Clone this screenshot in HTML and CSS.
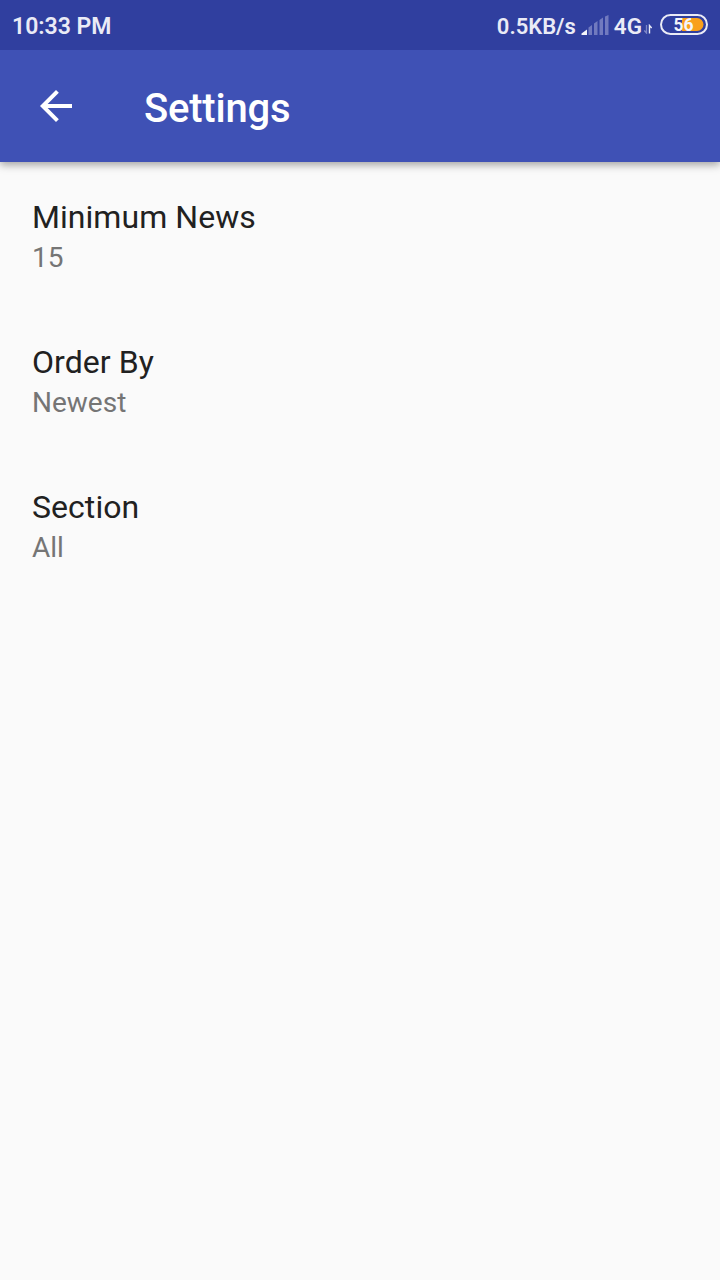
FILE: index.html
```html
<!DOCTYPE html>
<html lang="en">
<head>
<meta charset="utf-8">
<title>Settings</title>
<link rel="stylesheet" href="styles.css">
</head>
<body>
<div class="status-bar">
  <span class="clock">10:33 PM</span>
  <div class="indicators">
    <span class="speed">0.5KB/s</span>
    <svg class="signal" width="28" height="20" viewBox="0 0 28 20" aria-hidden="true">
      <path d="M.5 20V18.500L6 14.500V20Z" fill="#f4f5fb"/>
      <path d="M7.500 12.500l3.500-2.500v10H7.500zM13 8.500l3.500-2.500v14H13zM18.500 5l3.500-2.500V20h-3.500zM24 1.500L27.500 0v20H24z" fill="#717abf"/>
    </svg>
    <span class="network">4G</span>
    <svg class="data" width="8" height="10" viewBox="0 0 8 10" aria-hidden="true">
      <path d="M2.500 1v8L.3 6.500" fill="none" stroke="#7e87c7" stroke-width="1.300"/>
      <path d="M5.500 9.500V1.500L7.700 4" fill="none" stroke="#e8eaf6" stroke-width="1.400"/>
    </svg>
    <div class="battery">
      <svg class="battery-shape" width="48" height="21" viewBox="0 0 48 21" aria-hidden="true">
        <path d="M22 4H37a6.500 6.500 0 0 1 0 13H22z" fill="#f9a01b"/>
        <rect x="1" y="1" width="46" height="19" rx="9.500" fill="none" stroke="#eaebf6" stroke-width="2"/>
      </svg>
      <span class="battery-level">56</span>
    </div>
  </div>
</div>
<header class="app-bar">
  <svg class="back" width="48" height="48" viewBox="0 0 24 24" aria-label="Back">
    <path d="M20 11H7.830l5.590-5.590L12 4l-8 8 8 8 1.410-1.410L7.830 13H20v-2z" fill="#fff"/>
  </svg>
  <h1 class="title">Settings</h1>
</header>
<main class="preferences">
  <section class="preference">
    <div class="name">Minimum News</div>
    <div class="value">15</div>
  </section>
  <section class="preference">
    <div class="name">Order By</div>
    <div class="value">Newest</div>
  </section>
  <section class="preference">
    <div class="name">Section</div>
    <div class="value">All</div>
  </section>
</main>
</body>
</html>
```
FILE: styles.css
```css
* {
  box-sizing: border-box;
}

body {
  margin: 0;
  min-height: 1280px;
  background: #fafafa;
  font-family: Roboto, "Liberation Sans", sans-serif;
}

.status-bar {
  position: relative;
  z-index: 1;
  display: flex;
  justify-content: space-between;
  height: 50px;
  padding: 0 12px;
  background: #303f9f;
  color: #eaebf6;
  font-size: 23px;
  font-weight: 600;
  line-height: 54px;
}

.indicators {
  display: flex;
  align-items: flex-start;
}

.speed {
  font-size: 22px;
}

.signal {
  margin: 15px 5px 0;
}

.network {
  font-size: 22.500px;
  line-height: 52px;
}

.data {
  margin: 24px 8px 0 2px;
}

.battery {
  position: relative;
  width: 48px;
  height: 21px;
  margin-top: 14px;
}

.battery-shape {
  display: block;
}

.battery-level {
  position: absolute;
  inset: 0 1px 0 0;
  color: #f4f5fb;
  text-align: center;
  font-size: 17.500px;
  font-weight: 700;
  line-height: 22px;
}

.app-bar {
  display: flex;
  align-items: center;
  height: 112px;
  padding: 0 32px;
  background: #3f51b5;
  color: #fff;
  box-shadow: 0 3px 8px rgba(0, 0, 0, 0.35);
}

.title {
  margin: 6px 0 0 64px;
  font-size: 40px;
  font-weight: 500;
  letter-spacing: -0.200px;
  line-height: 48px;
}

.preferences {
  padding-top: 36px;
}

.preference {
  height: 145px;
  padding: 0 32px;
}

.name {
  color: #212121;
  font-size: 32px;
  letter-spacing: 0.050px;
  line-height: 38px;
}

.value {
  margin-top: 5px;
  color: #757575;
  font-size: 28px;
  line-height: 33px;
}
```
